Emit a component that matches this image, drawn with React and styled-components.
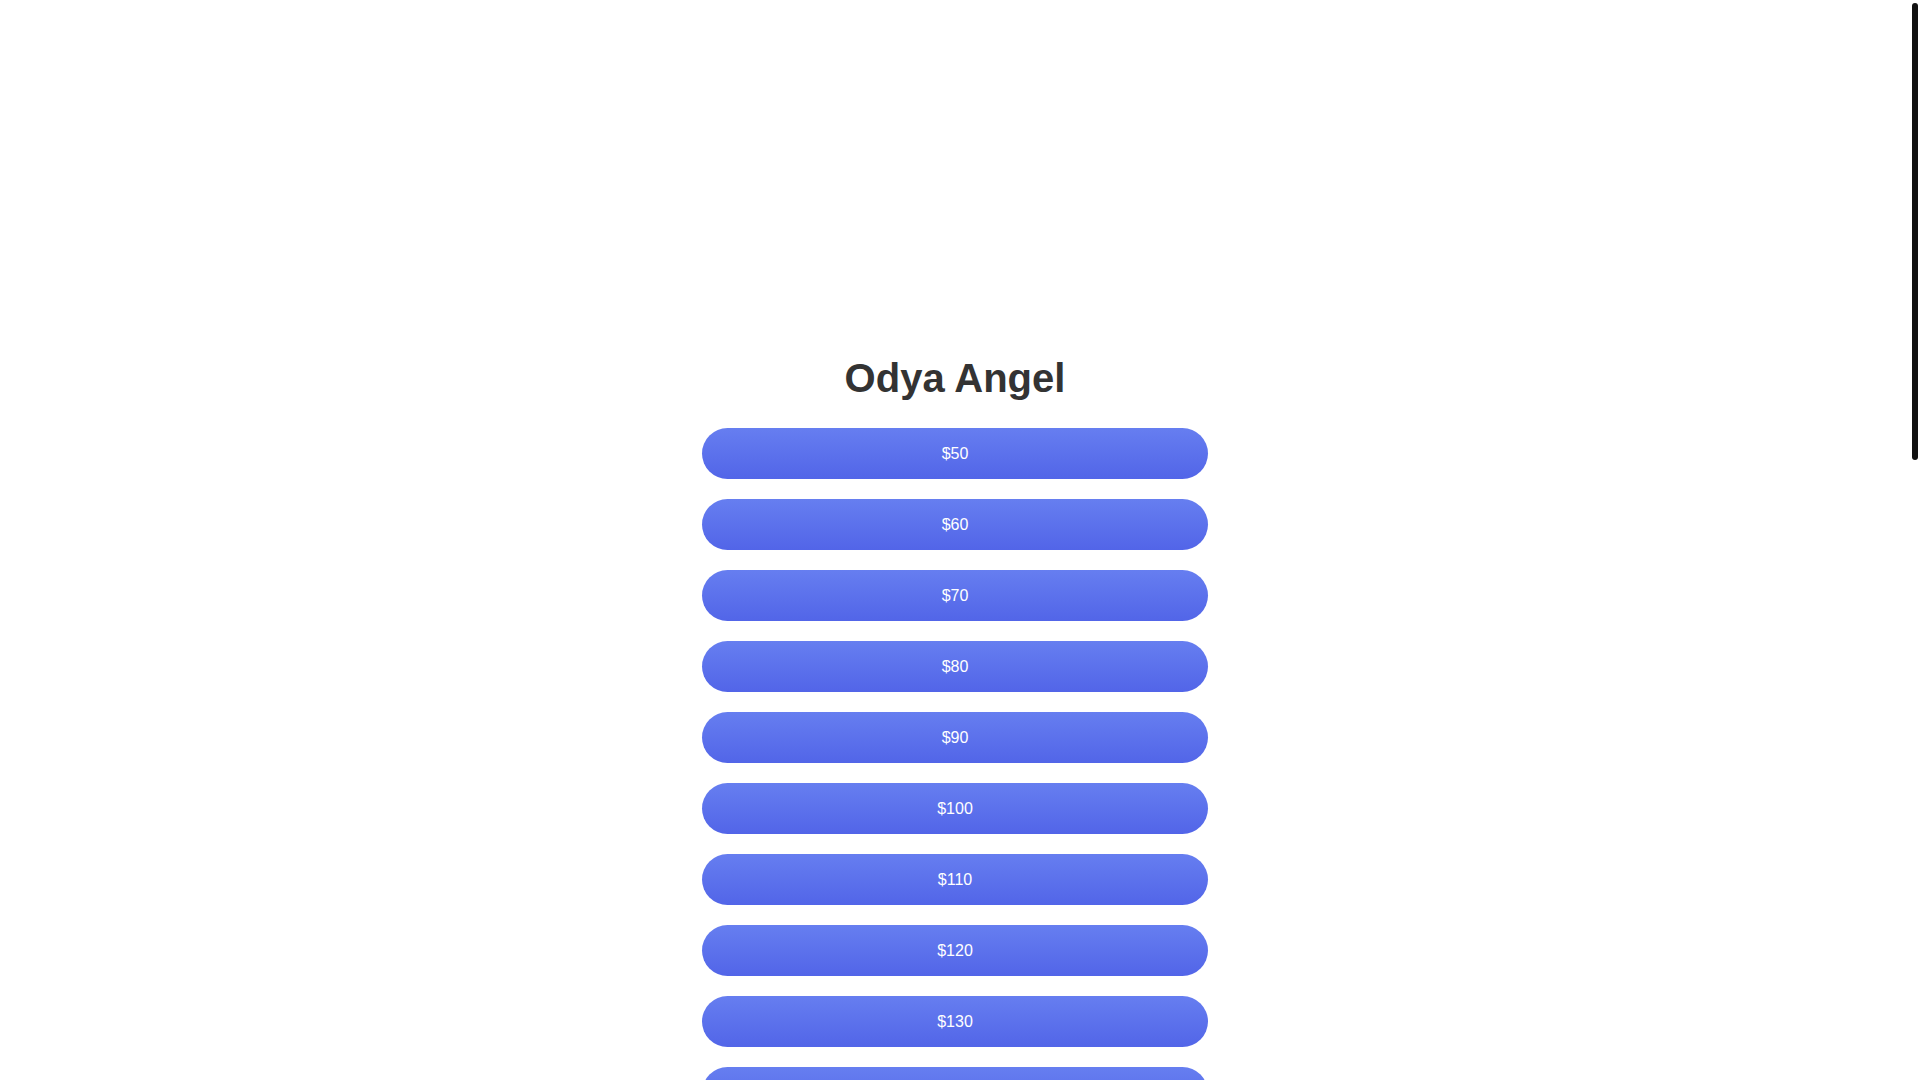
import React from "react";
import styled, { createGlobalStyle } from "styled-components";

const GlobalStyle = createGlobalStyle`
  html, body {
    margin: 0;
    padding: 0;
    background: #ffffff;
  }
  body {
    font-family: "Liberation Sans", Arial, sans-serif;
  }
`;

const Page = styled.main`
  display: flex;
  flex-direction: column;
  align-items: center;
  padding: 356px 10px 0 0;
`;

const ScrollTrack = styled.div`
  position: fixed;
  top: 0;
  right: 0;
  width: 10px;
  height: 100vh;
  background: #ffffff;
  z-index: 10;
`;

const ScrollThumb = styled.div`
  position: absolute;
  top: 3px;
  left: 2px;
  width: 6px;
  height: 457px;
  border-radius: 3px;
  background: #111111;
`;

const Title = styled.h1`
  margin: 0 0 27px;
  font-size: 40px;
  font-weight: 700;
  color: #333333;
  text-align: center;
`;

const List = styled.div`
  display: flex;
  flex-direction: column;
  gap: 20px;
  width: 506px;
  padding-bottom: 20px;
`;

const AmountButton = styled.button`
  display: flex;
  align-items: center;
  justify-content: center;
  width: 100%;
  height: 51px;
  padding: 0;
  border: none;
  border-radius: 26px;
  background: linear-gradient(180deg, #667ef0 0%, #5265e8 100%);
  color: #ffffff;
  font-family: "Liberation Sans", Arial, sans-serif;
  font-size: 16px;
  cursor: pointer;
`;

const amounts = Array.from({ length: 30 }, (_, i) => 50 + i * 10);

export default function App() {
  return (
    <>
      <GlobalStyle />
      <Page>
        <Title>Odya Angel</Title>
        <List>
          {amounts.map((a) => (
            <AmountButton key={a}>${a}</AmountButton>
          ))}
        </List>
      </Page>
      <ScrollTrack aria-hidden="true">
        <ScrollThumb />
      </ScrollTrack>
    </>
  );
}
